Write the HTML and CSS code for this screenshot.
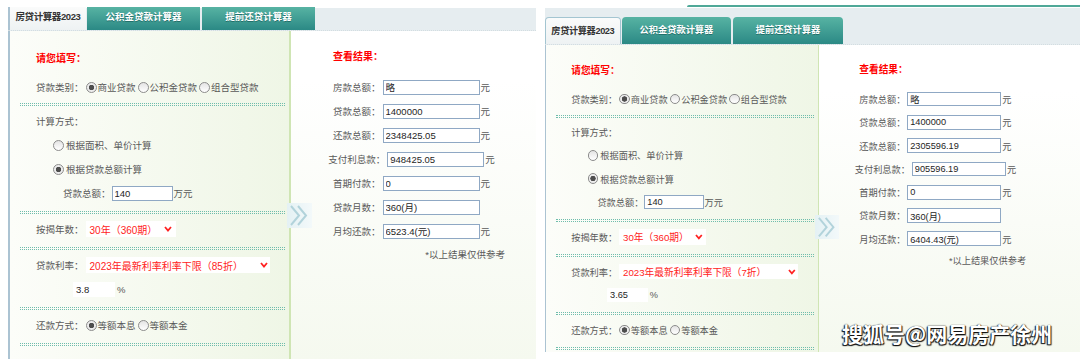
FILE: index.html
```html
<!DOCTYPE html>
<html lang="zh-CN">
<head>
    <meta charset="UTF-8">
    <meta name="viewport" content="width=device-width, initial-scale=1.0">
    <title>房贷计算器2023</title>
    <link rel="stylesheet" href="styles.css">
</head>
<body>
<div class="page">

    <!-- 85折 -->
    <div class="shot shot-left">
        <div class="tabs">
            <div class="tab active">房贷计算器2023</div>
            <div class="tab">公积金贷款计算器</div>
            <div class="tab tab-last">提前还贷计算器</div>
        </div>
        <div class="calc">
            <div class="fill">
                <div class="group group-first">
                    <div class="row title">请您填写：</div>
                    <div class="row row-cat">贷款类别：<span class="radio on"></span>商业贷款<span class="radio"></span>公积金贷款<span class="radio"></span>组合型贷款</div>
                </div>
                <div class="dots"></div>
                <div class="group">
                    <div class="row">计算方式：</div>
                    <div class="row opt"><span class="radio"></span>根据面积、单价计算</div>
                    <div class="row opt"><span class="radio on"></span>根据贷款总额计算</div>
                    <div class="row sub">贷款总额：<input class="box box-amount" value="140" readonly>万元</div>
                </div>
                <div class="dots"></div>
                <div class="group">
                    <div class="row">按揭年数：<div class="select select-years"><span>30年（360期）</span><svg class="chev" viewBox="0 0 8 6"><polyline points="1,1 4,4.5 7,1"/></svg></div></div>
                </div>
                <div class="dots"></div>
                <div class="group">
                    <div class="row">贷款利率：<div class="select select-rate"><span>2023年最新利率利率下限（85折）</span><svg class="chev" viewBox="0 0 8 6"><polyline points="1,1 4,4.5 7,1"/></svg></div></div>
                    <div class="row rate-val"><input class="box box-rate" value="3.8" readonly>%</div>
                </div>
                <div class="dots"></div>
                <div class="group">
                    <div class="row">还款方式：<span class="radio on"></span>等额本息<span class="radio"></span>等额本金</div>
                </div>
                <div class="dots"></div>
            </div>
            <div class="result">
                <div class="result-box">
                    <div class="result-title">查看结果：</div>
                    <div class="rrow">房款总额：<input class="box box-result" value="略" readonly>元</div>
                    <div class="rrow">贷款总额：<input class="box box-result" value="1400000" readonly>元</div>
                    <div class="rrow">还款总额：<input class="box box-result" value="2348425.05" readonly>元</div>
                    <div class="rrow">支付利息款：<input class="box box-result" value="948425.05" readonly>元</div>
                    <div class="rrow">首期付款：<input class="box box-result" value="0" readonly>元</div>
                    <div class="rrow">贷款月数：<input class="box box-result" value="360(月)" readonly><span class="unit-blank">元</span></div>
                    <div class="rrow">月均还款：<input class="box box-result" value="6523.4(元)" readonly>元</div>
                    <div class="note">*以上结果仅供参考</div>
                </div>
            </div>
            <svg class="arrow" viewBox="0 0 25 25">
                <defs>
                    <linearGradient id="ag1" x1="0" x2="1" y1="0" y2="0">
                        <stop offset="0" stop-color="#e4f1f4"/>
                        <stop offset="1" stop-color="#f3f9fa"/>
                    </linearGradient>
                </defs>
                <rect width="25" height="25" fill="url(#ag1)"/>
                <polyline points="4,3 12,12.5 4,22"/>
                <polyline points="11,3 19,12.5 11,22"/>
            </svg>
        </div>
    </div>

    <!-- 7折 -->
    <div class="shot shot-right">
        <div class="topline"></div>
        <div class="frame">
            <div class="tabs tabs-tall">
                <div class="tab active">房贷计算器2023</div>
                <div class="tab">公积金贷款计算器</div>
                <div class="tab tab-last">提前还贷计算器</div>
            </div>
            <div class="calc calc-short">
                <div class="fill">
                    <div class="group group-first">
                        <div class="row title">请您填写：</div>
                        <div class="row row-cat">贷款类别：<span class="radio on"></span>商业贷款<span class="radio"></span>公积金贷款<span class="radio"></span>组合型贷款</div>
                    </div>
                    <div class="dots"></div>
                    <div class="group">
                        <div class="row">计算方式：</div>
                        <div class="row opt"><span class="radio"></span>根据面积、单价计算</div>
                        <div class="row opt"><span class="radio on"></span>根据贷款总额计算</div>
                        <div class="row sub">贷款总额：<input class="box box-amount" value="140" readonly>万元</div>
                    </div>
                    <div class="dots"></div>
                    <div class="group">
                        <div class="row">按揭年数：<div class="select select-years"><span>30年（360期）</span><svg class="chev" viewBox="0 0 8 6"><polyline points="1,1 4,4.5 7,1"/></svg></div></div>
                    </div>
                    <div class="dots"></div>
                    <div class="group">
                        <div class="row">贷款利率：<div class="select select-rate"><span>2023年最新利率利率下限（7折）</span><svg class="chev" viewBox="0 0 8 6"><polyline points="1,1 4,4.5 7,1"/></svg></div></div>
                        <div class="row rate-val"><input class="box box-rate" value="3.65" readonly>%</div>
                    </div>
                    <div class="dots"></div>
                    <div class="group">
                        <div class="row">还款方式：<span class="radio on"></span>等额本息<span class="radio"></span>等额本金</div>
                    </div>
                    <div class="dots"></div>
                </div>
                <div class="result">
                    <div class="result-box">
                        <div class="result-title">查看结果：</div>
                        <div class="rrow">房款总额：<input class="box box-result" value="略" readonly>元</div>
                        <div class="rrow">贷款总额：<input class="box box-result" value="1400000" readonly>元</div>
                        <div class="rrow">还款总额：<input class="box box-result" value="2305596.19" readonly>元</div>
                        <div class="rrow">支付利息款：<input class="box box-result" value="905596.19" readonly>元</div>
                        <div class="rrow">首期付款：<input class="box box-result" value="0" readonly>元</div>
                        <div class="rrow">贷款月数：<input class="box box-result" value="360(月)" readonly><span class="unit-blank">元</span></div>
                        <div class="rrow">月均还款：<input class="box box-result" value="6404.43(元)" readonly>元</div>
                        <div class="note">*以上结果仅供参考</div>
                    </div>
                </div>
                <svg class="arrow arrow-low" viewBox="0 0 25 25">
                    <defs>
                        <linearGradient id="ag2" x1="0" x2="1" y1="0" y2="0">
                            <stop offset="0" stop-color="#e4f1f4"/>
                            <stop offset="1" stop-color="#f3f9fa"/>
                        </linearGradient>
                    </defs>
                    <rect width="25" height="25" fill="url(#ag2)"/>
                    <polyline points="4,3 12,12.5 4,22"/>
                    <polyline points="11,3 19,12.5 11,22"/>
                </svg>
            </div>
        </div>
    </div>

    <div class="mark">搜狐号@网易房产徐州</div>
</div>
</body>
</html>
```

FILE: styles.css
```css
* {
    box-sizing: border-box;
}
body {
    margin: 0;
    background: #fff;
    font-family: "Liberation Sans", "Noto Sans CJK SC", sans-serif;
    font-size: 9.5px;
    color: #595959;
}
.page {
    display: flex;
    align-items: flex-start;
    height: 359px;
    overflow: hidden;
    position: relative;
}
.shot-left {
    flex: none;
    width: 528px;
    margin-left: 8px;
    padding-top: 8px;
}
.shot-right {
    flex: 1;
    margin-left: 9px;
    padding-top: 5px;
    overflow: hidden;
}
.topline {
    height: 2px;
    margin: 0 0 1px 142px;
    background: #4fa898;
    border-radius: 2px 0 0 0;
}
.frame {
    width: 552px;
    zoom: 0.97;
}

/* tabs */
.tabs {
    display: flex;
    align-items: flex-end;
    height: 23px;
    background: #e6edf0;
    border-bottom: 1px dotted #d3dde1;
}
.tab {
    width: 113px;
    height: 23px;
    line-height: 20px;
    margin-left: 1px;
    text-align: center;
    font-weight: bold;
    color: #fff;
    background: linear-gradient(#57b3a3, #2b8985);
    text-shadow: 0 1px 0 #22706a;
    white-space: nowrap;
}
.tab-last {
    margin-left: 2px;
}
.tab.active {
    width: 78px;
    margin-left: 0;
    border-left: 2px solid #abc3d2;
    color: #333;
    background: linear-gradient(#fafbfb, #eef2f3);
    text-shadow: none;
    letter-spacing: -0.4px;
}
.tabs-tall {
    height: 38px;
}
.tabs-tall .tab {
    height: 28px;
    line-height: 27px;
    border-radius: 4px 4px 0 0;
}
.tabs-tall .tab.active {
    border: 1px solid #a3c5d1;
    border-left-width: 2px;
    border-bottom: none;
}

/* calculator body */
.calc {
    display: flex;
    position: relative;
    height: 330px;
    border-left: 2px solid #abc3d2;
}
.calc-short {
    height: 317px;
}
.fill {
    flex: none;
    width: 281px;
    border-right: 2px solid #cfe5b4;
    background: linear-gradient(to right, #fcfdf9, #eff6e6);
}
.result {
    flex: 1;
    background: linear-gradient(#fff 15%, #f5f9ef);
}
.result-box {
    width: 245px;
    padding-top: 14px;
}

.group {
    margin: 0 4px 0 10px;
    padding: 3px 0 6px 16px;
}
.group-first {
    padding-top: 14px;
    padding-bottom: 4px;
}
.dots {
    height: 3px;
    margin: 0 4px 0 10px;
    border-top: 1px dotted #6fbdac;
    border-bottom: 1px dotted #6fbdac;
}
.row {
    display: flex;
    align-items: center;
    height: 24px;
    white-space: nowrap;
}
.title,
.result-title {
    color: #f00;
    font-weight: bold;
    font-size: 10px;
}
.row-cat {
    margin-top: 6px;
}
.radio {
    flex: none;
    width: 11px;
    height: 11px;
    margin: 0 1px 0 2px;
    border: 1px solid #8c8c8c;
    border-radius: 50%;
    background: linear-gradient(#e4e4e4, #fff);
}
.radio.on {
    background: radial-gradient(circle, #4d4d4d 0 2.5px, #ececec 3px);
}
.opt {
    padding-left: 15px;
}
.opt .radio {
    margin-right: 2px;
}
.sub {
    padding-left: 27px;
}
.box {
    height: 15px;
    padding: 0 2px;
    border: 1px solid #8fa8c4;
    background: #fff;
    font: inherit;
    color: #1e1e1e;
    outline: none;
}
.box-amount {
    width: 61px;
    margin: 0 1px 0 1px;
}
.select {
    display: flex;
    align-items: center;
    justify-content: space-between;
    height: 16px;
    margin-left: 2px;
    padding: 0 4px;
    background: #fff;
    color: #f22;
    font-size: 10px;
}
.select-years {
    width: 90px;
}
.select-rate {
    width: 184px;
    padding-right: 2px;
}
.chev {
    width: 8px;
    height: 6px;
    fill: none;
    stroke: #f22;
    stroke-width: 1.8;
}
.rate-val {
    padding-left: 37px;
}
.box-rate {
    width: 42px;
    margin-right: 2px;
    border-color: transparent;
}

/* results */
.result-title {
    padding-left: 42px;
    line-height: 24px;
    margin-bottom: 6px;
}
.rrow {
    display: flex;
    justify-content: center;
    align-items: center;
    height: 24px;
    padding-right: 4px;
    white-space: nowrap;
}
.box-result {
    width: 97px;
    margin: 0 1px 0 2px;
}
.unit-blank {
    visibility: hidden;
}
.note {
    text-align: right;
    padding-right: 31px;
    line-height: 24px;
}

.arrow {
    position: absolute;
    left: 277px;
    top: 172px;
    width: 25px;
    height: 25px;
    fill: none;
    stroke: #b2d3db;
    stroke-width: 2;
}
.arrow rect {
    stroke: none;
}
.arrow-low {
    top: 175px;
}

.mark {
    position: absolute;
    left: 842px;
    top: 323px;
    font-family: "Noto Sans CJK SC", sans-serif;
    font-size: 21px;
    font-weight: bold;
    line-height: 1;
    color: #fff;
    text-shadow: -1px 1px 1px #111, 1px 1px 1px #111, 0 0 1px #000;
}
```
